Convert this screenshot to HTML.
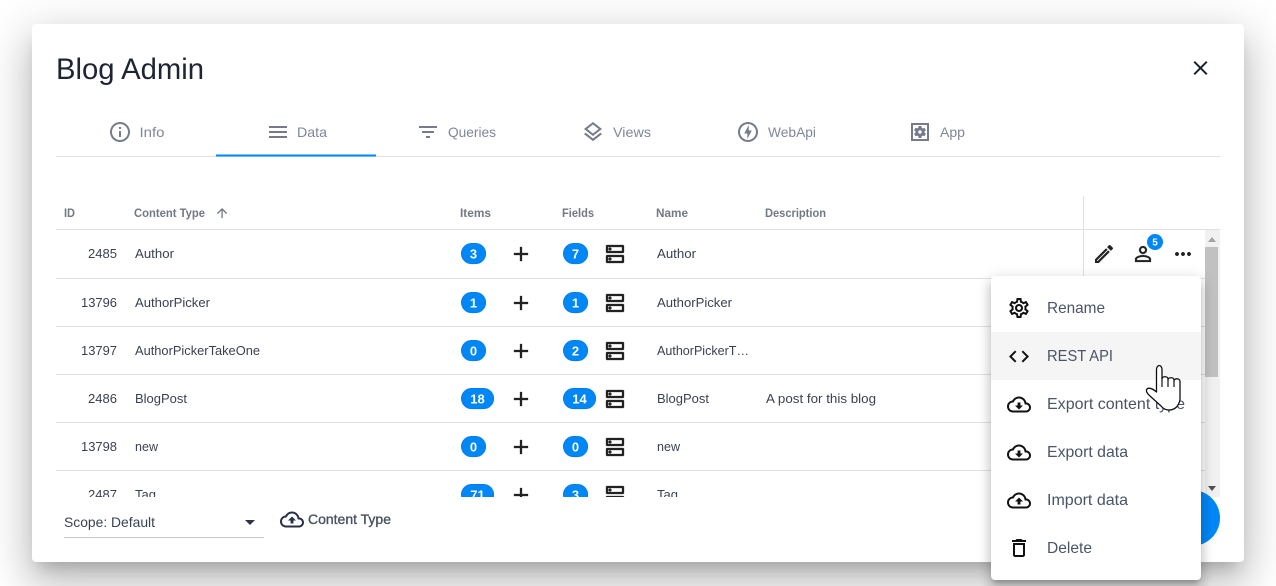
<!DOCTYPE html>
<html><head><meta charset="utf-8"><title>Blog Admin</title>
<style>
html,body{margin:0;padding:0;background:#fff;width:1276px;height:586px;overflow:hidden}
.dlg{position:absolute;left:32px;top:24px;width:1212px;height:538px;background:#fff;border-radius:4px;box-shadow:0 11px 15px -7px rgba(0,0,0,.2),0 24px 38px 3px rgba(0,0,0,.14),0 9px 46px 8px rgba(0,0,0,.12)}
.menu{position:absolute;left:991px;top:276px;width:210px;height:304px;background:#fff;border-radius:4px;box-shadow:0 5px 5px -3px rgba(0,0,0,.2),0 8px 10px 1px rgba(0,0,0,.14),0 3px 14px 2px rgba(0,0,0,.12)}
svg{position:absolute;left:0;top:0}
text{font-family:"Liberation Sans",sans-serif}
.tab{font-size:14px;fill:#80869a}
.th{font-size:12px;font-weight:bold;fill:#727884}
.td{font-size:13px;fill:#3a4150}
.b{font-size:13px;font-weight:bold;fill:#fff;text-anchor:middle}
.m{font-size:16px;fill:#4a5368}
.bd{fill:#0087f7;stroke:#0a7ad8;stroke-width:.6}
.ic{fill:#222;stroke:#222;stroke-width:.3}
</style></head><body>
<div class="dlg"></div>
<svg width="1276" height="586" viewBox="0 0 1276 586" xmlns="http://www.w3.org/2000/svg">
<defs>
<path id="info" d="M11 7h2v2h-2zm0 4h2v6h-2zm1-9C6.48 2 2 6.48 2 12s4.48 10 10 10 10-4.48 10-10S17.52 2 12 2zm0 18c-4.41 0-8-3.59-8-8s3.59-8 8-8 8 3.59 8 8-3.59 8-8 8z"/>
<path id="dns" d="M19 15v4H5v-4h14m1-2H4c-.55 0-1 .45-1 1v6c0 .55.45 1 1 1h16c.55 0 1-.45 1-1v-6c0-.55-.45-1-1-1zM7 18.5c-.82 0-1.5-.67-1.5-1.5s.68-1.5 1.5-1.5 1.5.67 1.5 1.5-.67 1.500-1.500 1.500zM19 5v4H5V5h14m1-2H4c-.55 0-1 .45-1 1v6c0 .55.45 1 1 1h16c.55 0 1-.45 1-1V4c0-.55-.45-1-1-1zM7 8.5c-.82 0-1.5-.67-1.5-1.5S6.18 5.5 7 5.5s1.5.68 1.5 1.5S7.83 8.5 7 8.5z"/>
<path id="add" d="M19 13h-6v6h-2v-6H5v-2h6V5h2v6h6v2z"/>
<path id="cl" d="M19.35 10.04C18.67 6.59 15.64 4 12 4 9.11 4 6.6 5.64 5.35 8.04 2.34 8.36 0 10.91 0 14c0 3.31 2.69 6 6 6h13c2.76 0 5-2.24 5-5 0-2.64-2.05-4.78-4.65-4.96zM19 18H6c-2.21 0-4-1.79-4-4 0-2.05 1.53-3.76 3.56-3.97l1.07-.11.5-.95C8.08 7.14 9.94 6 12 6c2.62 0 4.88 1.86 5.39 4.43l.3 1.5 1.53.11c1.56.1 2.78 1.41 2.78 2.96 0 1.65-1.35 3-3 3z"/>
<g id="cdown"><use href="#cl"/><path d="M13.45 10h-2.9v3H8l4 4 4-4h-2.55z"/></g>
<g id="cup"><use href="#cl"/><path d="M8 13h2.55v3h2.9v-3H16l-4-4z"/></g>
<clipPath id="tb"><rect x="56" y="230" width="1149" height="267"/></clipPath>
</defs>

<text x="56" y="79" font-size="30" fill="#1f2433" textLength="148" lengthAdjust="spacingAndGlyphs">Blog Admin</text>
<path transform="translate(1188.5 56)" fill="#1a2030" d="M19 6.41L17.59 5 12 10.59 6.41 5 5 6.41 10.59 12 5 17.59 6.41 19 12 13.41 17.59 19 19 17.59 13.41 12z"/>

<!-- tabs -->
<g fill="#757b8c">
<use href="#info" transform="translate(108 120)"/>
<path transform="translate(266 120)" d="M3 18h18v-2H3v2zm0-5h18v-2H3v2zm0-7v2h18V6H3z"/>
<path transform="translate(416 120)" d="M10 18h4v-2h-4v2zM3 6v2h18V6H3zm3 7h12v-2H6v2z"/>
<path transform="translate(581 120)" d="M11.99 18.54l-7.37-5.73L3 14.07l9 7 9-7-1.63-1.27zM12 16l7.36-5.73L21 9l-9-7-9 7 1.63 1.27L12 16zm0-11.47L17.74 9 12 13.47 6.26 9 12 4.53z"/>
<path transform="translate(736 120)" d="M12 2.02c-5.51 0-9.98 4.47-9.98 9.98s4.47 9.98 9.98 9.98 9.98-4.47 9.98-9.98S17.51 2.02 12 2.02zm0 17.96c-4.4 0-7.98-3.58-7.98-7.98S7.6 4.02 12 4.02 19.98 7.6 19.98 12 16.4 19.98 12 19.98zM12.75 5l-4.5 8.5h3.14V19l4.36-8.5h-3z"/>
<path transform="translate(908 120)" fill-rule="evenodd" d="M3 3h18v18H3zM5 5v14h14V5zM6.21 13.97l1.2 2.07c.08.13.23.18.37.13l1.49-.6c.31.24.64.44 1.01.59l.22 1.59c.03.14.15.25.3.25h2.4c.15 0 .27-.11.3-.25l.22-1.59c.36-.15.7-.35 1.01-.59l1.49.6c.14.05.29 0 .37-.13l1.2-2.07c.08-.13.04-.29-.07-.39l-1.27-.99c.03-.19.04-.39.04-.58 0-.2-.02-.39-.04-.59l1.27-.99c.11-.09.15-.26.07-.39l-1.2-2.07c-.08-.13-.23-.18-.37-.13l-1.49.6c-.31-.24-.64-.44-1.01-.59l-.22-1.59c-.03-.14-.15-.25-.3-.25h-2.4c-.15 0-.27.11-.3.25l-.22 1.59c-.36.15-.71.34-1.01.58l-1.49-.6c-.14-.05-.29 0-.37.13l-1.2 2.07c-.08.13-.04.29.07.39l1.27.99c-.03.2-.05.39-.05.59 0 .2.02.39.04.59l-1.27.99c-.11.1-.14.26-.06.39zM12 10.29c.94 0 1.71.77 1.71 1.71s-.77 1.71-1.71 1.71-1.71-.77-1.71-1.71.77-1.71 1.71-1.71z"/>
</g>
<text class="tab" x="139.5" y="137" textLength="25" lengthAdjust="spacingAndGlyphs">Info</text>
<text class="tab" x="297" y="137" textLength="30" lengthAdjust="spacingAndGlyphs">Data</text>
<text class="tab" x="448" y="137" textLength="48" lengthAdjust="spacingAndGlyphs">Queries</text>
<text class="tab" x="613" y="137" textLength="38" lengthAdjust="spacingAndGlyphs">Views</text>
<text class="tab" x="768" y="137" textLength="48" lengthAdjust="spacingAndGlyphs">WebApi</text>
<text class="tab" x="940" y="137" textLength="25" lengthAdjust="spacingAndGlyphs">App</text>
<rect x="56" y="156" width="1164" height="1" fill="#e0e0e0"/>
<rect x="216" y="154.500" width="160" height="2" fill="#0087f7"/>

<!-- table header -->
<text class="th" x="64" y="217" textLength="11" lengthAdjust="spacingAndGlyphs">ID</text>
<text class="th" x="134" y="217" textLength="71" lengthAdjust="spacingAndGlyphs">Content Type</text>
<path transform="translate(214.500 205.500) scale(.63)" fill="#6e7480" d="M4 12l1.41 1.41L11 7.830V20h2V7.830l5.580 5.590L20 12l-8-8-8 8z"/>
<text class="th" x="460" y="217" textLength="31" lengthAdjust="spacingAndGlyphs">Items</text>
<text class="th" x="562" y="217" textLength="32" lengthAdjust="spacingAndGlyphs">Fields</text>
<text class="th" x="656" y="217" textLength="32" lengthAdjust="spacingAndGlyphs">Name</text>
<text class="th" x="765" y="217" textLength="61" lengthAdjust="spacingAndGlyphs">Description</text>

<!-- lines -->
<rect x="56" y="229" width="1164" height="1" fill="#e0e0e0"/>
<rect x="1083" y="196" width="1" height="83" fill="#e0e0e0"/>
<g fill="#e0e0e0">
<rect x="56" y="278" width="1149" height="1"/>
<rect x="56" y="326" width="1149" height="1"/>
<rect x="56" y="374" width="1149" height="1"/>
<rect x="56" y="422" width="1149" height="1"/>
<rect x="56" y="470" width="1149" height="1"/>
</g>

<!-- rows -->
<g clip-path="url(#tb)">
<text class="td" x="88" y="258" textLength="29" lengthAdjust="spacingAndGlyphs">2485</text>
<text class="td" x="135" y="258" textLength="39" lengthAdjust="spacingAndGlyphs">Author</text>
<text class="td" x="657" y="258" textLength="39" lengthAdjust="spacingAndGlyphs">Author</text>
<rect class="bd" x="461.300" y="243.300" width="24.500" height="20.500" rx="10.250"/><text class="b" x="473.500" y="258.500">3</text>
<use href="#add" x="509" y="242" class="ic"/>
<rect class="bd" x="563.300" y="243.300" width="24.500" height="20.500" rx="10.250"/><text class="b" x="575.500" y="258.500">7</text>
<use href="#dns" x="603" y="242" class="ic"/>

<text class="td" x="81" y="307" textLength="36" lengthAdjust="spacingAndGlyphs">13796</text>
<text class="td" x="135" y="307" textLength="75" lengthAdjust="spacingAndGlyphs">AuthorPicker</text>
<text class="td" x="657" y="307" textLength="75" lengthAdjust="spacingAndGlyphs">AuthorPicker</text>
<rect class="bd" x="461.300" y="292.300" width="24.500" height="20.500" rx="10.250"/><text class="b" x="473.500" y="307.500">1</text>
<use href="#add" x="509" y="291" class="ic"/>
<rect class="bd" x="563.300" y="292.300" width="24.500" height="20.500" rx="10.250"/><text class="b" x="575.500" y="307.500">1</text>
<use href="#dns" x="603" y="291" class="ic"/>

<text class="td" x="81" y="355" textLength="36" lengthAdjust="spacingAndGlyphs">13797</text>
<text class="td" x="135" y="355" textLength="125" lengthAdjust="spacingAndGlyphs">AuthorPickerTakeOne</text>
<text class="td" x="657" y="355" textLength="92" lengthAdjust="spacingAndGlyphs">AuthorPickerT…</text>
<rect class="bd" x="461.300" y="340.300" width="24.500" height="20.500" rx="10.250"/><text class="b" x="473.500" y="355.500">0</text>
<use href="#add" x="509" y="339" class="ic"/>
<rect class="bd" x="563.300" y="340.300" width="24.500" height="20.500" rx="10.250"/><text class="b" x="575.500" y="355.500">2</text>
<use href="#dns" x="603" y="339" class="ic"/>

<text class="td" x="88" y="403" textLength="29" lengthAdjust="spacingAndGlyphs">2486</text>
<text class="td" x="135" y="403" textLength="52" lengthAdjust="spacingAndGlyphs">BlogPost</text>
<text class="td" x="657" y="403" textLength="52" lengthAdjust="spacingAndGlyphs">BlogPost</text>
<text class="td" x="766" y="403" textLength="110" lengthAdjust="spacingAndGlyphs">A post for this blog</text>
<rect class="bd" x="461.300" y="388.300" width="32.500" height="20.500" rx="10.250"/><text class="b" x="477.500" y="403.500">18</text>
<use href="#add" x="509" y="387" class="ic"/>
<rect class="bd" x="563.300" y="388.300" width="32.500" height="20.500" rx="10.250"/><text class="b" x="579.500" y="403.500">14</text>
<use href="#dns" x="603" y="387" class="ic"/>

<text class="td" x="81" y="451" textLength="36" lengthAdjust="spacingAndGlyphs">13798</text>
<text class="td" x="135" y="451" textLength="23" lengthAdjust="spacingAndGlyphs">new</text>
<text class="td" x="657" y="451" textLength="23" lengthAdjust="spacingAndGlyphs">new</text>
<rect class="bd" x="461.300" y="436.300" width="24.500" height="20.500" rx="10.250"/><text class="b" x="473.500" y="451.500">0</text>
<use href="#add" x="509" y="435" class="ic"/>
<rect class="bd" x="563.300" y="436.300" width="24.500" height="20.500" rx="10.250"/><text class="b" x="575.500" y="451.500">0</text>
<use href="#dns" x="603" y="435" class="ic"/>

<text class="td" x="88" y="499" textLength="29" lengthAdjust="spacingAndGlyphs">2487</text>
<text class="td" x="135" y="499" textLength="21" lengthAdjust="spacingAndGlyphs">Tag</text>
<text class="td" x="657" y="499" textLength="21" lengthAdjust="spacingAndGlyphs">Tag</text>
<rect class="bd" x="461.300" y="484.300" width="32.500" height="20.500" rx="10.250"/><text class="b" x="477.500" y="499.500">71</text>
<use href="#add" x="509" y="483" class="ic"/>
<rect class="bd" x="563.300" y="484.300" width="24.500" height="20.500" rx="10.250"/><text class="b" x="575.500" y="499.500">3</text>
<use href="#dns" x="603" y="483" class="ic"/>
</g>

<!-- row1 actions -->
<g transform="translate(1092 242)">
<path fill="#222" d="M3 17.250V21h3.750L17.810 9.940l-3.750-3.750L3 17.250zM20.710 7.040c.39-.39.39-1.020 0-1.410l-2.340-2.340c-.39-.39-1.020-.39-1.410 0l-1.830 1.830 3.750 3.750 1.830-1.830z"/>
<path fill="none" stroke="#fff" stroke-width=".9" d="M5.200 18.800L15.800 8.200"/>
</g>
<path transform="translate(1131 242)" fill="#222" stroke="#222" stroke-width=".2" d="M12 5.900c1.160 0 2.100.94 2.100 2.100s-.94 2.100-2.100 2.100S9.900 9.160 9.900 8s.94-2.100 2.100-2.100m0 9c2.970 0 6.100 1.460 6.100 2.100v1.100H5.900V17c0-.64 3.130-2.100 6.100-2.100M12 4C9.790 4 8 5.790 8 8s1.790 4 4 4 4-1.790 4-4-1.790-4-4-4zm0 9c-2.670 0-8 1.340-8 4v3h16v-3c0-2.660-5.330-4-8-4z"/>
<circle cx="1155" cy="242" r="8" fill="#0087f7"/>
<text x="1155" y="245.500" font-size="10" font-weight="bold" fill="#fff" text-anchor="middle">5</text>
<path transform="translate(1171 242)" fill="#222" d="M6 10c-1.100 0-2 .9-2 2s.9 2 2 2 2-.9 2-2-.9-2-2-2zm12 0c-1.100 0-2 .9-2 2s.9 2 2 2 2-.9 2-2-.9-2-2-2zm-6 0c-1.100 0-2 .9-2 2s.9 2 2 2 2-.9 2-2-.9-2-2-2z"/>

<!-- scrollbar -->
<rect x="1205" y="230" width="15" height="267" fill="#f1f1f1"/>
<rect x="1205" y="247" width="13" height="130" fill="#c1c1c1"/>
<path d="M1208 242h8l-4-5z" fill="#a3a3a3"/>
<path d="M1208 486h8l-4 5z" fill="#505050"/>

<!-- FAB -->
<circle cx="1192" cy="518" r="28" fill="#0087f7"/>

<!-- footer -->
<text x="64" y="527" font-size="14" fill="#3a4256" textLength="91" lengthAdjust="spacingAndGlyphs">Scope: Default</text>
<path d="M245 520h10l-5 5z" fill="#2b3347"/>
<rect x="64" y="537" width="200" height="1" fill="#c8c8c8"/>
<use href="#cup" x="280" y="507.500" fill="#26304a"/>
<text x="308" y="524" font-size="14" fill="#4a5262" stroke="#4a5262" stroke-width=".35" textLength="83" lengthAdjust="spacingAndGlyphs">Content Type</text>
</svg>

<div class="menu"></div>
<svg width="1276" height="586" viewBox="0 0 1276 586" xmlns="http://www.w3.org/2000/svg">
<rect x="991" y="332" width="210" height="48" fill="#f5f5f5"/>
<path transform="translate(1007 296)" fill="#111" d="M19.430 12.980c.04-.32.07-.64.07-.98 0-.34-.03-.66-.07-.98l2.110-1.650c.19-.15.24-.42.12-.64l-2-3.460c-.09-.16-.26-.25-.44-.25-.06 0-.12.01-.17.03l-2.490 1c-.52-.4-1.080-.73-1.690-.98l-.38-2.650C14.460 2.180 14.250 2 14 2h-4c-.25 0-.46.18-.49.42l-.38 2.650c-.61.25-1.170.59-1.690.98l-2.490-1c-.06-.02-.12-.03-.18-.03-.17 0-.34.09-.43.25l-2 3.460c-.13.22-.07.49.12.64l2.110 1.650c-.04.32-.07.65-.07.98 0 .33.03.66.07.98l-2.110 1.650c-.19.15-.24.42-.12.64l2 3.460c.09.16.26.25.44.25.06 0 .12-.01.17-.03l2.490-1c.52.4 1.080.73 1.690.98l.38 2.650c.03.24.24.42.49.42h4c.25 0 .46-.18.49-.42l.38-2.650c.61-.25 1.170-.59 1.690-.98l2.490 1c.06.02.12.03.18.03.17 0 .34-.09.43-.25l2-3.460c.12-.22.07-.49-.12-.64l-2.110-1.650zm-1.980-1.710c.04.31.05.52.05.73 0 .21-.02.43-.05.73l-.14 1.130.89.7 1.080.84-.7 1.210-1.270-.51-1.040-.42-.9.68c-.43.32-.84.56-1.250.73l-1.060.43-.16 1.130-.2 1.350h-1.400l-.19-1.350-.16-1.130-1.060-.43c-.43-.18-.83-.41-1.230-.71l-.91-.7-1.060.43-1.270.51-.7-1.210 1.080-.84.89-.7-.14-1.130c-.03-.31-.05-.54-.05-.74s.02-.43.05-.73l.14-1.130-.89-.7-1.080-.84.7-1.210 1.270.51 1.040.42.9-.68c.43-.32.84-.56 1.250-.73l1.060-.43.16-1.130.2-1.350h1.390l.19 1.350.16 1.130 1.060.43c.43.18.83.41 1.230.71l.91.7 1.060-.43 1.270-.51.7 1.210-1.070.85-.89.7.14 1.130zM12 8c-2.210 0-4 1.790-4 4s1.790 4 4 4 4-1.790 4-4-1.790-4-4-4zm0 6c-1.100 0-2-.9-2-2s.9-2 2-2 2 .9 2 2-.9 2-2 2z"/>
<path transform="translate(1007 344.500)" fill="#111" d="M9.400 16.600L4.800 12l4.600-4.600L8 6l-6 6 6 6 1.400-1.400zm5.200 0l4.600-4.600-4.600-4.600L16 6l6 6-6 6-1.400-1.400z"/>
<use href="#cdown" x="1007" y="392.500" fill="#111"/>
<use href="#cdown" x="1007" y="440.500" fill="#111"/>
<use href="#cup" x="1007" y="488.500" fill="#111"/>
<path transform="translate(1007 536)" fill="#111" d="M16 9v10H8V9h8m-1.500-6h-5l-1 1H5v2h14V4h-3.500l-1-1zM18 7H6v12c0 1.100.9 2 2 2h8c1.100 0 2-.9 2-2V7z"/>
<text class="m" x="1047" y="313" textLength="58" lengthAdjust="spacingAndGlyphs">Rename</text>
<text class="m" x="1047" y="361" textLength="66" lengthAdjust="spacingAndGlyphs">REST API</text>
<text class="m" x="1047" y="409" textLength="138" lengthAdjust="spacingAndGlyphs">Export content type</text>
<text class="m" x="1047" y="457" textLength="81" lengthAdjust="spacingAndGlyphs">Export data</text>
<text class="m" x="1047" y="505" textLength="81" lengthAdjust="spacingAndGlyphs">Import data</text>
<text class="m" x="1047" y="553" textLength="45" lengthAdjust="spacingAndGlyphs">Delete</text>
<!-- hand cursor -->
<path fill="#fff" stroke="#111" stroke-width="1.300" stroke-linejoin="round" d="M1156.500 392V370c0-6 5.500-6 5.500 0V379c0-3 6-3 6 0v1c0-3 6-3 6 0v1c0-3 6-3 6 .5V399c0 3-1 4-2 6-1.500 3-5 5-9 5-4 0-6-1.500-8-4l-11-10c-3-2.500-4.500-5.500-3-7 1.500-1.500 5-1 9.500 3z"/>
<path stroke="#111" stroke-width="1.200" fill="none" d="M1162 378v9M1168 380v7M1174 381v6"/>
</svg>
</body></html>
